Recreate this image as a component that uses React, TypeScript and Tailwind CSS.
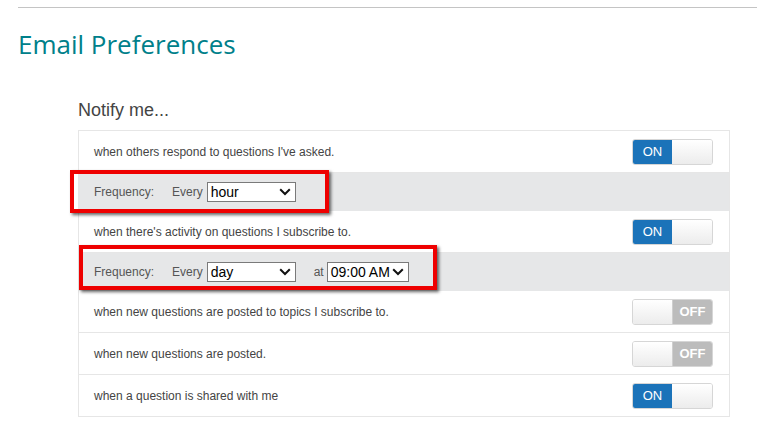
import React from "react";

const Chevron = () => (
  <svg width="12" height="8" viewBox="0 0 12 8" className="ml-[2px] shrink-0">
    <path d="M1.2 1.3 L6 6 L10.8 1.3" fill="none" stroke="#111" strokeWidth="2" />
  </svg>
);

const Select = ({ value, width }: { value: string; width: string }) => (
  <div
    className={`flex h-[20px] items-center justify-between whitespace-nowrap border border-[#7a7a7a] bg-white pl-[3px] pr-[4px] text-[14px] leading-none text-black ${width}`}
  >
    <span>{value}</span>
    <Chevron />
  </div>
);

const Toggle = ({ on }: { on: boolean }) =>
  on ? (
    <div className="flex h-[26px] w-[81px] overflow-hidden rounded-[3px] border border-[#d6d6d6]">
      <div className="flex w-[39px] items-center justify-center bg-[#1b73b9] text-[13px] text-white">ON</div>
      <div className="flex-1 bg-gradient-to-b from-white to-[#ececec]" />
    </div>
  ) : (
    <div className="flex h-[26px] w-[81px] overflow-hidden rounded-[3px] border border-[#d6d6d6]">
      <div className="w-[40px] border-r border-[#cfcfcf] bg-gradient-to-b from-white to-[#ececec]" />
      <div className="flex flex-1 items-center justify-center bg-[#bcbcbc] text-[13px] font-bold text-white">OFF</div>
    </div>
  );

const Row = ({ text, on }: { text: string; on: boolean }) => (
  <div className="flex h-[42px] items-center justify-between border-b border-[#e6e6e6] pl-[15px] pr-[16px]">
    <span>{text}</span>
    <Toggle on={on} />
  </div>
);

export default function App() {
  return (
    <div className="min-h-screen bg-white pt-[7px] font-['Liberation_Sans',Arial,sans-serif] text-[12px] text-[#444]">
      <div className="ml-[18px] border-t border-[#c4c4c4]">
        <h1 className="mt-[20px] font-['Open_Sans',sans-serif] text-[26px] leading-[32px] text-[#00808a]">
          Email Preferences
        </h1>
        <div className="ml-[60px] mt-[39px] w-[652px]">
          <div className="mb-[9px] text-[18px] leading-[22px] text-[#444]">Notify me...</div>
          <div className="relative border-x border-t border-[#e6e6e6]">
            <Row text="when others respond to questions I've asked." on />
            <div className="flex h-[38px] items-center bg-[#e6e7e8] pl-[15px] text-[#555]">
              <span className="w-[78px]">Frequency:</span>
              <span className="mr-[4px]">Every</span>
              <Select value="hour" width="w-[89px]" />
            </div>
            <Row text="when there's activity on questions I subscribe to." on />
            <div className="flex h-[38px] items-center bg-[#e6e7e8] pl-[15px] text-[#555]">
              <span className="w-[78px]">Frequency:</span>
              <span className="mr-[4px]">Every</span>
              <Select value="day" width="w-[89px]" />
              <span className="ml-[18px] mr-[3px]">at</span>
              <Select value="09:00 AM" width="w-[82px]" />
            </div>
            <Row text="when new questions are posted to topics I subscribe to." on={false} />
            <Row text="when new questions are posted." on={false} />
            <Row text="when a question is shared with me" on />

            <div className="pointer-events-none absolute left-[-9px] top-[39px] h-[43px] w-[259px] border-[4px] border-[#ee0000] shadow-[2px_2px_3px_rgba(0,0,0,0.6)]" />
            <div className="pointer-events-none absolute left-[0px] top-[114px] h-[45px] w-[358px] border-[4px] border-[#ee0000] shadow-[2px_2px_3px_rgba(0,0,0,0.6)]" />
          </div>
        </div>
      </div>
    </div>
  );
}
